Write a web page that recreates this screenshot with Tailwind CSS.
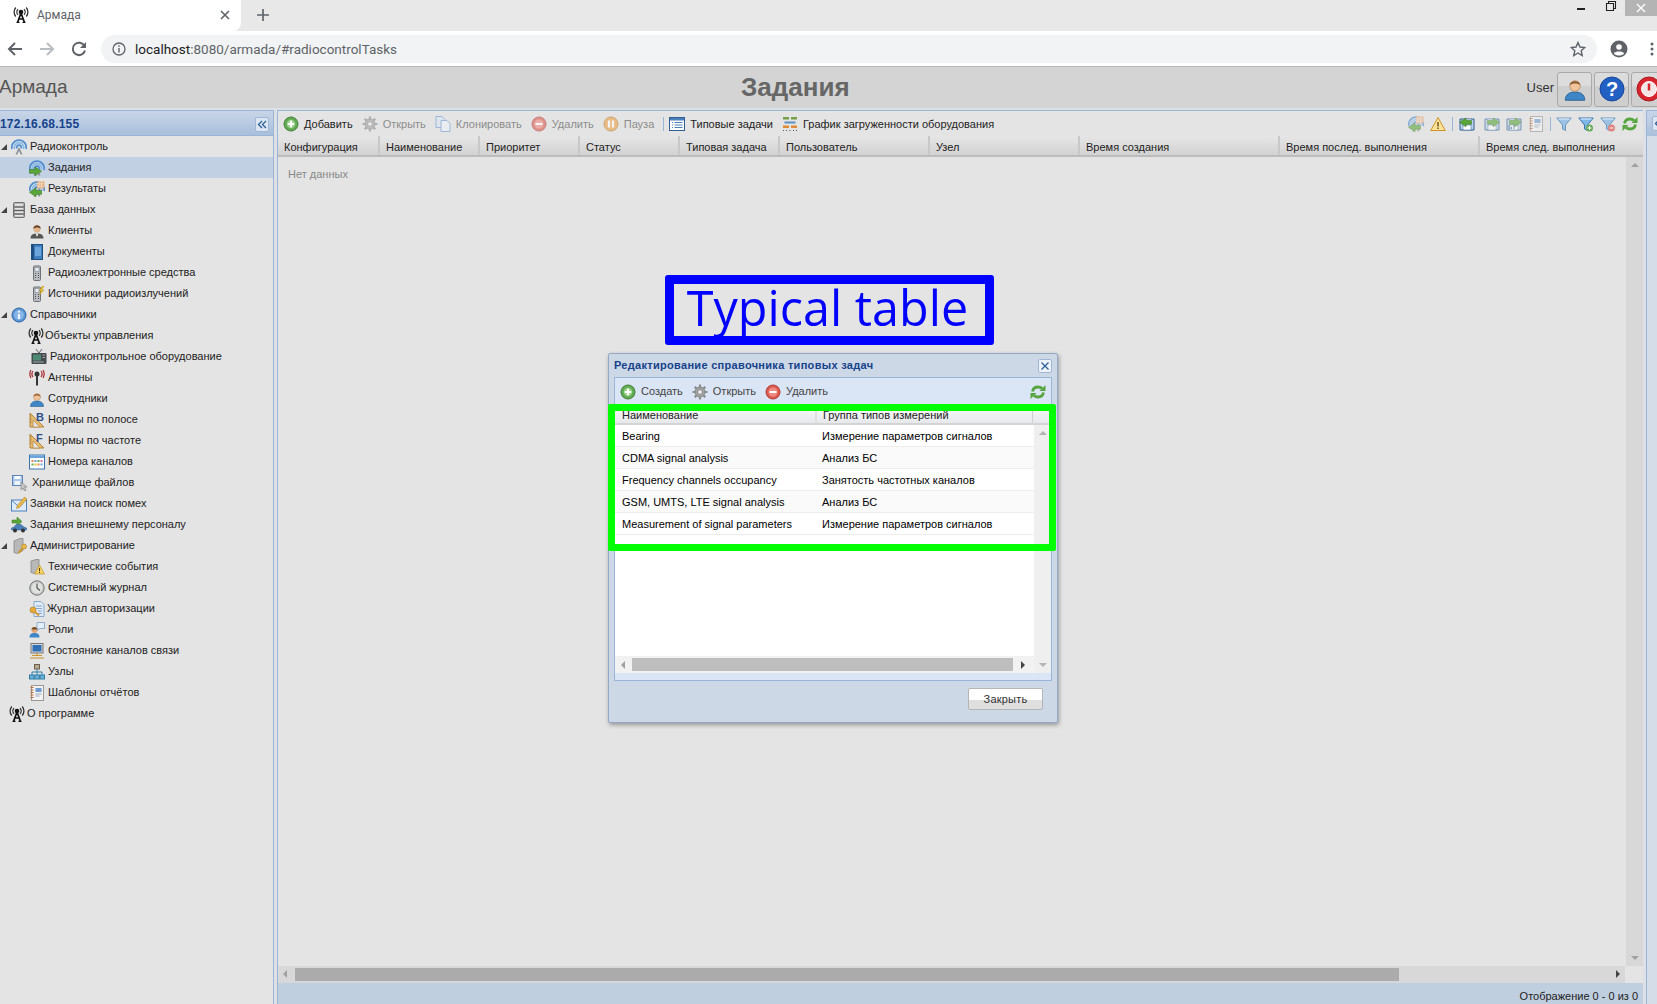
<!DOCTYPE html>
<html lang="ru">
<head>
<meta charset="UTF-8">
<title>Армада</title>
<script src="https://cdn.jsdelivr.net/npm/@tailwindcss/browser@4"></script>
</head>
<body class="relative w-[1657px] h-[1004px] overflow-hidden bg-[#e4e4e4] text-[11px] text-[#222] font-['Liberation_Sans',Arial,sans-serif]">

<!-- icon sprites -->
<svg class="hidden">
  <symbol id="antenna" viewBox="0 0 16 16"><g fill="none" stroke="#111" stroke-width="1.700"><path d="M8 6 4.500 15.500M8 6l3.500 9.500M5.800 12h4.400M3.500 15.500h3M9.500 15.500h3"/><path d="M5 7.800a4 4 0 0 1 0-5.600M11 7.800a4 4 0 0 0 0-5.600" stroke="#333" stroke-width="1.300"/><path d="M2.800 9.500a6.800 6.800 0 0 1 0-9M13.200 9.500a6.800 6.800 0 0 0 0-9" stroke="#333" stroke-width="1.300"/></g><circle cx="8" cy="5" r="2.300" fill="#111"/></symbol>
  <symbol id="radar" viewBox="0 0 16 16"><g fill="none" stroke-width="1.700"><path d="M1 10a7.200 7.200 0 1 1 14 0" stroke="#4f8fd0"/><path d="M3.600 10a4.700 4.700 0 1 1 8.800 0" stroke="#8dbbe8"/><path d="M5.800 9.500a2.400 2.400 0 1 1 4.400 0" stroke="#4f8fd0"/></g><path d="M8 8 4.500 15.500h1.800L8 11.800l1.700 3.700h1.800z" fill="#8a8f96"/></symbol>
  <symbol id="arrowleft" viewBox="0 0 16 16"><path d="M7 7 .5 11.300 7 15.800v-2.500h5.500V9.500H7z" fill="#5aa63a" stroke="#3a7a22" stroke-width=".6"/></symbol>
  <symbol id="arrowright" viewBox="0 0 16 16"><path d="M6 7l6.500 4.300L6 15.800v-2.500H.5V9.500H6z" fill="#5aa63a" stroke="#3a7a22" stroke-width=".6"/></symbol>
  <symbol id="server" viewBox="0 0 16 16"><rect x="2.500" y=".5" width="11" height="15" rx="1" fill="#a8a8a8" stroke="#737373"/><path d="M3 5h10M3 8.500h10M3 12h10" stroke="#5e5e5e"/><rect x="4" y="1.800" width="8" height="2" fill="#e6e6e6"/><rect x="4" y="6" width="8" height="1.500" fill="#e6e6e6"/><rect x="4" y="9.500" width="8" height="1.500" fill="#e6e6e6"/><rect x="4" y="13" width="8" height="1.500" fill="#e6e6e6"/></symbol>
  <symbol id="person" viewBox="0 0 16 16"><path d="M1.500 15.500c0-4 3-5.500 6.500-5.500s6.500 1.500 6.500 5.500z" fill="#3f86c6" stroke="#2a5f90" stroke-width=".6"/><circle cx="8" cy="6" r="3.500" fill="#f0c39a" stroke="#b98a60" stroke-width=".5"/><path d="M4.500 5.500C4.500 2 11.500 2 11.500 5.500 10 4 6 4 4.500 5.500z" fill="#8a5a2c"/></symbol>
  <symbol id="phone" viewBox="0 0 16 16"><rect x="4.500" y="1" width="7" height="14.500" rx="1" fill="#b8bcc0" stroke="#6d7277"/><rect x="6" y="2.500" width="4" height="4" fill="#e4edf5" stroke="#6d7277" stroke-width=".5"/><path d="M6 8.500h1M9 8.500h1M6 10.500h1M9 10.500h1M6 12.500h1M9 12.500h1" stroke="#555"/></symbol>
  <symbol id="ruler" viewBox="0 0 16 16"><path d="M1 1v14h14z" fill="#e6bd70" stroke="#b5853a"/><path d="M4 8v7h7z" fill="#e4e4e4" stroke="#b5853a" stroke-width=".7"/><path d="M1 4h1.500M1 7h1.500M1 10h1.500" stroke="#8a6428" stroke-width=".7"/></symbol>
  <symbol id="gear" viewBox="0 0 16 16"><circle cx="8" cy="8" r="5" fill="#a5a5a5" stroke="#777" stroke-width=".8"/><path d="M8 .5v3M8 12.500v3M.5 8h3M12.500 8h3M2.700 2.700l2 2M11.300 11.300l2 2M2.700 13.300l2-2M11.300 4.700l2-2" stroke="#8c8c8c" stroke-width="2.200"/><circle cx="8" cy="8" r="2.500" fill="#e8e8e8" stroke="#777" stroke-width=".8"/></symbol>
  <symbol id="plus" viewBox="0 0 16 16"><circle cx="8" cy="8" r="7" fill="#62ab54" stroke="#3f8035"/><circle cx="8" cy="8" r="4.200" fill="#9ed28f"/><path d="M8 4.800v6.400M4.800 8h6.400" stroke="#fff" stroke-width="2"/></symbol>
  <symbol id="minus" viewBox="0 0 16 16"><circle cx="8" cy="8" r="7" fill="#dd5a50" stroke="#b23a32"/><circle cx="8" cy="8" r="4.500" fill="#ee8a80"/><path d="M4.500 8h7" stroke="#fff" stroke-width="2"/></symbol>
  <symbol id="pause" viewBox="0 0 16 16"><circle cx="8" cy="8" r="7" fill="#eda24a" stroke="#c27a25"/><path d="M6 4.500v7M10 4.500v7" stroke="#fff" stroke-width="2.200"/></symbol>
  <symbol id="copy" viewBox="0 0 16 16"><path d="M1 .5h6l3 3v8H1z" fill="#dbe7f6" stroke="#6d9ad0"/><path d="M6 4.500h6l3 3v8H6z" fill="#eef4fb" stroke="#6d9ad0"/></symbol>
  <symbol id="table" viewBox="0 0 16 16"><rect x=".5" y="1.500" width="15" height="13" fill="#fff" stroke="#2e5f96"/><rect x="1" y="2" width="14" height="2.500" fill="#4a7fb8"/><path d="M3 6.500h1M3 9h1M3 11.500h1M5.500 6.500h8M5.500 9h8M5.500 11.500h8" stroke="#4a7fb8"/></symbol>
  <symbol id="gantt" viewBox="0 0 16 16"><rect x="1" y="1" width="6" height="2.500" fill="#76a04a"/><rect x="9" y="1" width="6" height="2.500" fill="#76a04a"/><rect x="2.500" y="5.500" width="11" height="2" fill="#5c8fc4"/><rect x="1" y="9.500" width="6" height="2.500" fill="#e08a3a"/><rect x="9" y="9.500" width="6" height="2.500" fill="#e08a3a"/><path d="M1 14.500h1M4 14.500h1M7.500 14.500h1M11 14.500h1M14 14.500h1" stroke="#555"/></symbol>
  <symbol id="results" viewBox="0 0 16 16"><use href="#radar"/><path d="M8 .5h7.500v7H8z" fill="#e0a878"/><path d="M10 .5v7M12.500 .5v7M8 2.800h7.500M8 5.200h7.500" stroke="#f6e6d6" stroke-width=".7"/><use href="#arrowleft"/></symbol>
  <symbol id="tasks" viewBox="0 0 16 16"><use href="#radar"/><use href="#arrowright"/></symbol>
  <symbol id="warning" viewBox="0 0 16 16"><path d="M8 1.500 15.300 14.500H.7z" fill="#fbe49a" stroke="#cf9322"/><path d="M8 6v4.500M8 11.500v1.500" stroke="#6b4a10" stroke-width="1.400"/></symbol>
  <symbol id="notebook" viewBox="0 0 16 16"><rect x="2.500" y=".5" width="12" height="15" fill="#f2f2f2" stroke="#999"/><path d="M1.500 2.500h3M1.500 5h3M1.500 7.500h3M1.500 10h3M1.500 12.500h3" stroke="#b8652c" stroke-width="1.100"/><rect x="6.500" y="3" width="6" height="4" fill="#6d9ad0"/><path d="M6.500 9h6M6.500 11h4" stroke="#9ab"/></symbol>
  <symbol id="savefile" viewBox="0 0 16 16"><path d="M1 3h14v11H1z" fill="#bcd2ea" stroke="#2e5f96"/><rect x="4" y="3.500" width="8" height="3.500" fill="#eef4fb"/><rect x="4" y="9" width="8" height="5" fill="#fff" stroke="#2e5f96" stroke-width=".5"/></symbol>
  <symbol id="filter" viewBox="0 0 16 16"><path d="M.8 2h14.400L9.500 9v5.500L6.500 13V9z" fill="#7eb6e6" stroke="#3a76ae"/><path d="M2.500 3h11" stroke="#d8ecfb" stroke-width="1.200"/></symbol>
  <symbol id="refresh" viewBox="0 0 16 16"><g fill="none" stroke="#58a540" stroke-width="2.800"><path d="M2.500 7.500c.5-3 2.500-4.500 5.500-4.500 1.800 0 3 .5 4 1.500"/><path d="M13.500 8.500c-.5 3-2.500 4.500-5.500 4.500-1.800 0-3-.5-4-1.500"/></g><path d="M15.500 1v6h-6zM.5 15V9h6z" fill="#58a540"/></symbol>
  <symbol id="tree-arrow" viewBox="0 0 6 6"><path d="M6 0v6H0z" fill="#444"/></symbol>
</svg>

<!-- browser tab strip -->
<div class="relative flex h-[31px] bg-[#e8e8e8]">
  <div class="flex items-center w-[241px] h-[31px] pb-[2px] bg-white rounded-br-lg">
    <svg class="ml-[13px] w-4 h-4"><use href="#antenna"/></svg>
    <span class="ml-[8px] text-[12px] text-[#5f6368] font-['Roboto',sans-serif]">Армада</span>
    <svg class="ml-auto mr-[8px] w-[16px] h-[16px]" viewBox="0 0 16 16"><path d="M4 4l8 8M12 4l-8 8" stroke="#5f6368" stroke-width="1.600"/></svg>
  </div>
  <svg class="ml-[14px] mt-[7px] w-[16px] h-[16px]" viewBox="0 0 16 16"><path d="M8 2v12M2 8h12" stroke="#5f6368" stroke-width="1.700"/></svg>
  <div class="ml-auto flex items-start h-[16px]">
    <svg class="w-[26px] h-[16px] mr-[3px]" viewBox="0 0 26 16"><path d="M8 9h8" stroke="#222" stroke-width="2"/></svg>
    <svg class="w-[26px] h-[16px] mr-[1px]" viewBox="0 0 26 16"><path d="M8.500 3.500h7v7h-7zM10.500 3V1.500h7v7H16" fill="none" stroke="#222" stroke-width="1.100"/></svg>
    <div class="flex items-center justify-center w-[32px] h-[16px] bg-[#b4b4b4]">
      <svg class="w-[12px] h-[12px]" viewBox="0 0 12 12"><path d="M2 2l8 8M10 2l-8 8" stroke="#fff" stroke-width="1.400"/></svg>
    </div>
  </div>
</div>

<!-- browser toolbar -->
<div class="flex items-center h-[36px] pt-px bg-white border-b border-[#b8b8b8]">
  <svg class="ml-[7px] w-4 h-4" viewBox="0 0 16 16"><path d="M15 8H2M8 2 2 8l6 6" fill="none" stroke="#5f6368" stroke-width="2"/></svg>
  <svg class="ml-[16px] w-4 h-4" viewBox="0 0 16 16"><path d="M1 8h13M8 2l6 6-6 6" fill="none" stroke="#b9bcc0" stroke-width="2"/></svg>
  <svg class="ml-[16px] w-4 h-4" viewBox="0 0 16 16"><path d="M13.500 5A6.200 6.200 0 1 0 14 9.500" fill="none" stroke="#5f6368" stroke-width="2"/><path d="M15 1v6H9z" fill="#5f6368"/></svg>
  <div class="flex items-center ml-[14px] w-[1496px] h-[28px] bg-[#f1f3f4] rounded-full">
    <svg class="ml-[11px] w-[14px] h-[14px]" viewBox="0 0 14 14"><circle cx="7" cy="7" r="6" fill="none" stroke="#5f6368" stroke-width="1.300"/><path d="M7 6v4.500M7 3.300v1.500" stroke="#5f6368" stroke-width="1.400"/></svg>
    <span class="ml-[9px] text-[13.5px] text-[#5f6368] font-['Roboto',sans-serif]"><span class="text-[#202124]">localhost</span>:8080/armada/#radiocontrolTasks</span>
    <svg class="ml-auto mr-[11px] w-[16px] h-[16px]" viewBox="0 0 16 16"><path d="M8 1.500l2 4.500 4.800.5-3.600 3.200 1 4.800L8 12l-4.200 2.500 1-4.800L1.200 6.500 6 6z" fill="none" stroke="#5f6368" stroke-width="1.400"/></svg>
  </div>
  <svg class="ml-[13px] w-[18px] h-[18px]" viewBox="0 0 18 18"><circle cx="9" cy="9" r="8.500" fill="#5f6368"/><circle cx="9" cy="7" r="2.800" fill="#fff"/><path d="M3.800 13.500c1.500-2.600 8.900-2.600 10.400 0-2.600 2.800-7.800 2.800-10.400 0z" fill="#fff"/></svg>
  <svg class="ml-[22px] w-[4px] h-[14px]" viewBox="0 0 4 14"><circle cx="2" cy="2" r="1.500" fill="#5f6368"/><circle cx="2" cy="7" r="1.500" fill="#5f6368"/><circle cx="2" cy="12" r="1.500" fill="#5f6368"/></svg>
</div>

<!-- app header -->
<div class="flex items-center h-[41px] bg-[#d4d4d4]">
  <div class="w-[742px] -ml-[1px] text-[19px] text-[#555]">Армада</div>
  <div class="text-[26px] font-bold text-[#666]">Задания</div>
  <span class="ml-auto mr-[3px] text-[13px] text-[#333]">User</span>
  <div class="flex gap-[2px] -mr-[9px] mt-[3px]">
    <div class="flex items-center justify-center w-[35px] h-[35px] rounded-[3px] border border-[#aaa] bg-[linear-gradient(#dcdcdc_38%,#cfcfcf_38%)]">
      <svg class="w-[24px] h-[24px]"><use href="#person"/></svg>
    </div>
    <div class="flex items-center justify-center w-[35px] h-[35px] rounded-[3px] border border-[#aaa] bg-[linear-gradient(#dcdcdc_38%,#cfcfcf_38%)]">
      <svg class="w-[26px] h-[26px]" viewBox="0 0 26 26"><circle cx="13" cy="13" r="12" fill="#2260c4" stroke="#174a96"/><text x="13" y="20" text-anchor="middle" font-size="20" font-weight="700" fill="#fff">?</text></svg>
    </div>
    <div class="flex items-center justify-center w-[35px] h-[35px] rounded-[3px] border border-[#aaa] bg-[linear-gradient(#dcdcdc_38%,#cfcfcf_38%)]">
      <svg class="w-[26px] h-[26px]" viewBox="0 0 26 26"><circle cx="13" cy="13" r="12" fill="#d8242c" stroke="#a81a20"/><circle cx="13" cy="13" r="7.500" fill="#f4e6e6" stroke="#fff"/><path d="M13 7.500v7" stroke="#d8242c" stroke-width="2.500"/></svg>
    </div>
  </div>
</div>

<!-- workspace -->
<div class="flex h-[896px] pt-[2px] bg-[#dde1e6]">

  <!-- navigation tree -->
  <aside class="w-[274px] shrink-0 bg-[#e4e4e4] border-r border-t border-[#99b5d8]">
    <div class="relative flex items-center h-[25px] pt-[2px] border-b border-[#99b5d8] bg-[linear-gradient(#c8d5e7,#a9bfdb)]">
      <span class="text-[12px] tracking-[0.2px] font-bold text-[#15428b]">172.16.68.155</span>
      <div class="absolute right-[4px] top-[6px] flex items-center justify-center w-[14px] h-[15px] rounded-[2px] border border-[#9fb8d8] bg-[#dce6f3]">
        <svg class="w-[10px] h-[9px]" viewBox="0 0 10 9"><path d="M5 1 1.500 4.500 5 8M9 1 5.500 4.500 9 8" fill="none" stroke="#2e5f96" stroke-width="1.300"/></svg>
      </div>
    </div>
    <div class="text-[11px] text-[#222]">
      <div class="flex items-center h-[21px] pl-[1px]"><svg class="w-[6px] h-[6px]"><use href="#tree-arrow"/></svg><svg class="ml-[4px] w-4 h-4"><use href="#radar"/></svg><span class="ml-[3px]">Радиоконтроль</span></div>
      <div class="flex items-center h-[21px] pl-[29px] bg-[#c1d0e3]"><svg class="w-4 h-4"><use href="#tasks"/></svg><span class="ml-[3px]">Задания</span></div>
      <div class="flex items-center h-[21px] pl-[29px]"><svg class="w-4 h-4"><use href="#results"/></svg><span class="ml-[3px]">Результаты</span></div>
      <div class="flex items-center h-[21px] pl-[1px]"><svg class="w-[6px] h-[6px]"><use href="#tree-arrow"/></svg><svg class="ml-[4px] w-4 h-4"><use href="#server"/></svg><span class="ml-[3px]">База данных</span></div>
      <div class="flex items-center h-[21px] pl-[29px]"><svg class="w-4 h-4" viewBox="0 0 16 16"><path d="M1.500 15.500c0-4 3-5 6.500-5s6.500 1 6.500 5z" fill="#555"/><path d="M6.500 10.500 8 14l1.500-3.500z" fill="#eee"/><circle cx="8" cy="6" r="3.500" fill="#e2b48c"/><path d="M4.300 6C4 1 12 1 11.700 6 10 4 6 4 4.300 6z" fill="#6b4226"/></svg><span class="ml-[3px]">Клиенты</span></div>
      <div class="flex items-center h-[21px] pl-[29px]"><svg class="w-4 h-4" viewBox="0 0 16 16"><rect x="2.500" y=".5" width="11" height="15" fill="#3f7fbf" stroke="#1f4f80"/><rect x="3" y="1" width="2" height="14" fill="#1f4f80"/><rect x="6" y="3" width="6" height="9" fill="#6ba5dc"/></svg><span class="ml-[3px]">Документы</span></div>
      <div class="flex items-center h-[21px] pl-[29px]"><svg class="w-4 h-4"><use href="#phone"/></svg><span class="ml-[3px]">Радиоэлектронные средства</span></div>
      <div class="flex items-center h-[21px] pl-[29px]"><svg class="w-4 h-4" viewBox="0 0 16 16"><use href="#phone"/><path d="M13.500 0 10 5h2L10.500 9 15 4h-2.200L15 0z" fill="#e8c030" stroke="#b08a10" stroke-width=".4"/></svg><span class="ml-[3px]">Источники радиоизлучений</span></div>
      <div class="flex items-center h-[21px] pl-[1px]"><svg class="w-[6px] h-[6px]"><use href="#tree-arrow"/></svg><svg class="ml-[4px] w-4 h-4" viewBox="0 0 16 16"><circle cx="8" cy="8" r="7" fill="#5d97d6" stroke="#2e66a8"/><circle cx="8" cy="8" r="4.800" fill="#89b8e8"/><path d="M8 7v5M8 3.800v1.700" stroke="#fff" stroke-width="1.800"/></svg><span class="ml-[3px]">Справочники</span></div>
      <div class="flex items-center h-[21px] pl-[28px]"><svg class="w-4 h-4"><use href="#antenna"/></svg><span class="ml-[1px]">Объекты управления</span></div>
      <div class="flex items-center h-[21px] pl-[31px]"><svg class="w-4 h-4" viewBox="0 0 16 16"><path d="M5 0l3 4 3-4" fill="none" stroke="#556" stroke-width=".9"/><rect x=".5" y="4" width="15" height="11" rx="1" fill="#444b4f"/><rect x="2" y="5.500" width="8" height="6" fill="#4e8a72"/><path d="M11.500 6h2.500M11.500 8.500h2.500M2 13h11" stroke="#aaa"/></svg><span class="ml-[3px]">Радиоконтрольное оборудование</span></div>
      <div class="flex items-center h-[21px] pl-[29px]"><svg class="w-4 h-4" viewBox="0 0 16 16"><path d="M8 6v9.500" stroke="#333" stroke-width="2"/><circle cx="8" cy="4" r="2.500" fill="#333"/><path d="M4 1a5 5 0 0 0 0 6M12 1a5 5 0 0 1 0 6M2 0a8 8 0 0 0 0 8M14 0a8 8 0 0 1 0 8" fill="none" stroke="#a8282c" stroke-width="1.200"/></svg><span class="ml-[3px]">Антенны</span></div>
      <div class="flex items-center h-[21px] pl-[29px]"><svg class="w-4 h-4"><use href="#person"/></svg><span class="ml-[3px]">Сотрудники</span></div>
      <div class="flex items-center h-[21px] pl-[29px]"><svg class="w-4 h-4" viewBox="0 0 16 16"><use href="#ruler"/><text x="7" y="9" font-size="11" font-weight="700" fill="#2e4f86">B</text></svg><span class="ml-[3px]">Нормы по полосе</span></div>
      <div class="flex items-center h-[21px] pl-[29px]"><svg class="w-4 h-4" viewBox="0 0 16 16"><use href="#ruler"/><text x="7" y="9" font-size="11" font-weight="700" fill="#2e4f86">F</text></svg><span class="ml-[3px]">Нормы по частоте</span></div>
      <div class="flex items-center h-[21px] pl-[29px]"><svg class="w-4 h-4" viewBox="0 0 16 16"><rect x=".5" y="1" width="15" height="14" fill="#fff" stroke="#3a76ae"/><rect x="1" y="1.500" width="14" height="2.500" fill="#6ba5dc"/><path d="M2.500 6h2v2h-2z" fill="#e0864a"/><path d="M5.500 6h2v2h-2z" fill="#6ba5dc"/><path d="M8.500 6h2v2h-2z" fill="#62ab54"/><path d="M11.500 6h2v2h-2z" fill="#d870a0"/><path d="M2.500 9.500h2v2h-2z" fill="#62ab54"/><path d="M5.500 9.500h2v2h-2z" fill="#e8c030"/><path d="M8.500 9.500h2v2h-2z" fill="#e0864a"/><path d="M11.500 9.500h2v2h-2z" fill="#6ba5dc"/></svg><span class="ml-[3px]">Номера каналов</span></div>
      <div class="flex items-center h-[21px] pl-[12px]"><svg class="w-4 h-4" viewBox="0 0 16 16"><rect x=".5" y=".5" width="10" height="10" fill="#a9c6e8" stroke="#5c86b8"/><rect x="2.500" y="1" width="6" height="3" fill="#fff"/><rect x="2.500" y="6" width="6" height="4" fill="#eef4fb"/><path d="M9 7v8l2-2 1.500 3 1.500-.8L12.500 12h2.500z" fill="#c6c6c6" stroke="#777" stroke-width=".6"/></svg><span class="ml-[4px]">Хранилище файлов</span></div>
      <div class="flex items-center h-[21px] pl-[11px]"><svg class="w-4 h-4" viewBox="0 0 16 16"><rect x=".5" y="4" width="15" height="11" fill="#dfeafa" stroke="#4a7fb8"/><path d="M1 4.500 8 11l4-3.500" fill="none" stroke="#4a7fb8"/><path d="M6 10 13.500 1 16 3 8.500 11.500l-3 1z" fill="#e8b84a" stroke="#a87c20" stroke-width=".5"/></svg><span class="ml-[3px]">Заявки на поиск помех</span></div>
      <div class="flex items-center h-[21px] pl-[11px]"><svg class="w-4 h-4" viewBox="0 0 16 16"><path d="M1 3h5V0l5 4.500L6 9V6H1z" fill="#5aa63a" stroke="#3a7a22" stroke-width=".5"/><path d="M.5 13v-2l2.500-1 2-2.500h5l3 2.500 2.500 1v2z" fill="#4a7fb8" stroke="#2e5f96" stroke-width=".5"/><circle cx="4" cy="13.500" r="2" fill="#333"/><circle cx="12" cy="13.500" r="2" fill="#333"/></svg><span class="ml-[3px]">Задания внешнему персоналу</span></div>
      <div class="flex items-center h-[21px] pl-[1px]"><svg class="w-[6px] h-[6px]"><use href="#tree-arrow"/></svg><svg class="ml-[5px] w-4 h-4" viewBox="0 0 16 16"><path d="M2 3 8 .5h3v12l-6 3-3-1z" fill="#b8b8b8" stroke="#7c7c7c" stroke-width=".7"/><circle cx="12" cy="8.500" r="2.500" fill="#e8b84a" stroke="#a87c20" stroke-width=".6"/><path d="M10.500 10.500 6.500 15" stroke="#c8962c" stroke-width="2"/></svg><span class="ml-[2px]">Администрирование</span></div>
      <div class="flex items-center h-[21px] pl-[29px]"><svg class="w-4 h-4" viewBox="0 0 16 16"><path d="M2 2 7 .5h3v11l-5 3-3-1z" fill="#b8b8b8" stroke="#7c7c7c" stroke-width=".7"/><path d="M10.500 6l5 9h-10z" fill="#f4d468" stroke="#c2922a" stroke-width=".7"/><path d="M10.500 9v3.300M10.500 13v1" stroke="#5a4010"/></svg><span class="ml-[3px]">Технические события</span></div>
      <div class="flex items-center h-[21px] pl-[29px]"><svg class="w-4 h-4" viewBox="0 0 16 16"><circle cx="8" cy="8" r="7.200" fill="#c4c8c4" stroke="#777"/><circle cx="8" cy="8" r="5.500" fill="#dfe2df"/><path d="M8 3.500V8l3 2.500" fill="none" stroke="#555" stroke-width="1.200"/></svg><span class="ml-[3px]">Системный журнал</span></div>
      <div class="flex items-center h-[21px] pl-[29px]"><svg class="w-4 h-4" viewBox="0 0 16 16"><path d="M5 .5h7l3 3v12H5z" fill="#dfeafa" stroke="#8aa8c8"/><path d="M7 5h6M7 7.500h6M9 10h4M9 12.500h4" stroke="#8aa8c8"/><circle cx="4" cy="9" r="3" fill="#e8a83a" stroke="#a87c20" stroke-width=".6"/><path d="M6 11l4 3.500" stroke="#d8962c" stroke-width="2"/></svg><span class="ml-[2px]">Журнал авторизации</span></div>
      <div class="flex items-center h-[21px] pl-[29px]"><svg class="w-4 h-4" viewBox="0 0 16 16"><path d="M.5 15.500c0-3.500 2-4.500 5-4.500s5 1 5 4.500z" fill="#3f86c6"/><circle cx="5.500" cy="8" r="3" fill="#e2a878"/><path d="M2.500 7.500C2.500 4 8.500 4 8.500 7.500z" fill="#7a4c24"/><path d="M8 .5h7.500v6H11l-2.500 2 .5-2H8z" fill="#e4eef8" stroke="#7c9cc0" stroke-width=".8"/></svg><span class="ml-[3px]">Роли</span></div>
      <div class="flex items-center h-[21px] pl-[29px]"><svg class="w-4 h-4" viewBox="0 0 16 16"><rect x="2" y=".5" width="12" height="9.500" fill="#d8d8d8" stroke="#777"/><rect x="3.500" y="2" width="9" height="6.500" fill="#2e6fb8"/><path d="M8 10v2M3 12.500h10M1 15h14" stroke="#c8962c" stroke-width="1.200"/></svg><span class="ml-[3px]">Состояние каналов связи</span></div>
      <div class="flex items-center h-[21px] pl-[29px]"><svg class="w-4 h-4" viewBox="0 0 16 16"><rect x="5.500" y=".5" width="5" height="4.500" fill="#b8a890" stroke="#6c6050"/><path d="M8 5v3M3 11V8h10v3M8 8v3" fill="none" stroke="#2e7fa8"/><rect x=".5" y="11" width="4.500" height="4" fill="#6fb0d8" stroke="#2e7fa8"/><rect x="5.800" y="11" width="4.500" height="4" fill="#6fb0d8" stroke="#2e7fa8"/><rect x="11" y="11" width="4.500" height="4" fill="#6fb0d8" stroke="#2e7fa8"/></svg><span class="ml-[3px]">Узлы</span></div>
      <div class="flex items-center h-[21px] pl-[29px]"><svg class="w-4 h-4"><use href="#notebook"/></svg><span class="ml-[3px]">Шаблоны отчётов</span></div>
      <div class="flex items-center h-[21px] pl-[9px]"><svg class="w-4 h-4"><use href="#antenna"/></svg><span class="ml-[2px]">О программе</span></div>
    </div>
  </aside>

  <!-- main panel -->
  <main class="ml-[3px] shrink-0 flex flex-col w-[1366px] border-l border-t border-[#99b5d8] bg-[#e4e4e4]">
    <div class="flex items-center h-[25px] pt-[2px] pl-[5px] text-[11px]">
      <svg class="w-4 h-4"><use href="#plus"/></svg><span class="ml-[5px] text-[#222]">Добавить</span>
      <div class="flex items-center text-[#8c8c8c]">
        <svg class="ml-[9px] w-4 h-4 opacity-60"><use href="#gear"/></svg><span class="ml-[5px]">Открыть</span>
        <svg class="ml-[9px] w-4 h-4 opacity-60"><use href="#copy"/></svg><span class="ml-[5px]">Клонировать</span>
        <svg class="ml-[9px] w-4 h-4 opacity-60"><use href="#minus"/></svg><span class="ml-[5px]">Удалить</span>
        <svg class="ml-[9px] w-4 h-4 opacity-60"><use href="#pause"/></svg><span class="ml-[5px]">Пауза</span>
      </div>
      <div class="ml-[9px] w-px h-[14px] bg-[#99b5d8]"></div>
      <svg class="ml-[5px] w-4 h-4"><use href="#table"/></svg><span class="ml-[5px]">Типовые задачи</span>
      <svg class="ml-[9px] w-4 h-4"><use href="#gantt"/></svg><span class="ml-[5px]">График загруженности оборудования</span>
      <div class="ml-auto mr-[5px] flex items-center">
        <svg class="w-4 h-4 opacity-60"><use href="#results"/></svg>
        <svg class="ml-[6px] w-4 h-4"><use href="#warning"/></svg>
        <div class="ml-[6px] w-px h-[14px] bg-[#99b5d8]"></div>
        <svg class="ml-[5px] w-[18px] h-4" viewBox="0 0 16 16"><use href="#savefile"/><use href="#arrowleft" y="-5"/></svg>
        <svg class="ml-[8px] w-4 h-4 opacity-60" viewBox="0 0 16 16"><use href="#savefile"/><use href="#arrowright" x="3" y="-5"/></svg>
        <svg class="ml-[6px] w-4 h-4 opacity-60" viewBox="0 0 16 16"><use href="#savefile"/><path d="M3 13V9M5.500 13v-2M8 13V8" stroke="#2e5f96"/><use href="#arrowright" x="3" y="-5"/></svg>
        <svg class="ml-[6px] w-4 h-4 opacity-60"><use href="#notebook"/></svg>
        <div class="ml-[6px] w-px h-[14px] bg-[#99b5d8]"></div>
        <svg class="ml-[5px] w-4 h-4 opacity-70"><use href="#filter"/></svg>
        <svg class="ml-[6px] w-4 h-4" viewBox="0 0 16 16"><use href="#filter"/><circle cx="11.500" cy="12" r="3.500" fill="#62ab54"/><path d="M11.500 10v4M9.500 12h4" stroke="#fff"/></svg>
        <svg class="ml-[6px] w-4 h-4 opacity-70" viewBox="0 0 16 16"><use href="#filter"/><circle cx="11.500" cy="12" r="3.500" fill="#dd5a50"/><path d="M9.500 12h4" stroke="#fff"/></svg>
        <svg class="ml-[6px] w-4 h-4"><use href="#refresh"/></svg>
      </div>
    </div>

    <div class="flex h-[21px] border-b-2 border-[#bcbcbc] bg-[linear-gradient(#e6e6e6,#d2d2d2)] text-[#222]">
      <div class="w-[102px] pl-[6px] leading-[22px] border-r-2 border-[#c8c8c8]">Конфигурация</div>
      <div class="w-[100px] pl-[6px] leading-[22px] border-r-2 border-[#c8c8c8]">Наименование</div>
      <div class="w-[100px] pl-[6px] leading-[22px] border-r-2 border-[#c8c8c8]">Приоритет</div>
      <div class="w-[100px] pl-[6px] leading-[22px] border-r-2 border-[#c8c8c8]">Статус</div>
      <div class="w-[100px] pl-[6px] leading-[22px] border-r-2 border-[#c8c8c8]">Типовая задача</div>
      <div class="w-[150px] pl-[6px] leading-[22px] border-r-2 border-[#c8c8c8]">Пользователь</div>
      <div class="w-[150px] pl-[6px] leading-[22px] border-r-2 border-[#c8c8c8]">Узел</div>
      <div class="w-[200px] pl-[6px] leading-[22px] border-r-2 border-[#c8c8c8]">Время создания</div>
      <div class="w-[200px] pl-[6px] leading-[22px] border-r-2 border-[#c8c8c8]">Время послед. выполнения</div>
      <div class="flex-1 pl-[6px] leading-[22px]">Время след. выполнения</div>
    </div>

    <div class="flex h-[811px]">
      <div class="flex-1 pl-[10px] pt-[9px] text-[#888]">Нет данных</div>
      <div class="flex flex-col items-center justify-between w-[17px] py-[6px] bg-[#d8d8d8]">
        <div class="w-0 h-0 border-x-[4px] border-x-transparent border-b-[4px] border-b-[#a0a0a0]"></div>
        <div class="w-0 h-0 border-x-[4px] border-x-transparent border-t-[4px] border-t-[#a0a0a0]"></div>
      </div>
    </div>

    <div class="flex items-center h-[17px]">
      <div class="flex items-center w-[1347px] h-[17px] bg-[#d8d8d8]">
        <div class="ml-[5px] w-0 h-0 border-y-[4px] border-y-transparent border-r-[4px] border-r-[#a0a0a0]"></div>
        <div class="ml-[8px] w-[1104px] h-[13px] bg-[#ababab]"></div>
        <div class="ml-[217px] w-0 h-0 border-y-[4px] border-y-transparent border-l-[4px] border-l-[#444]"></div>
      </div>
    </div>

    <div class="flex-1 flex items-center justify-end pt-[5px] pr-[5px] bg-[#c0cfdf] text-[#222]">Отображение 0 - 0 из 0</div>
  </main>

  <!-- collapsed right panel -->
  <div class="ml-[3px] w-[11px] shrink-0 overflow-hidden border-l border-t border-[#99b5d8] bg-[#d4dde8]">
    <div class="flex items-center h-[25px] pl-[5px] bg-[linear-gradient(#c8d5e7,#a9bfdb)]">
      <div class="flex items-center justify-center w-[14px] h-[15px] shrink-0 rounded-[2px] border border-[#9fb8d8] bg-[#dce6f3]">
        <svg class="w-[10px] h-[9px]" viewBox="0 0 10 9"><path d="M5 1 1.500 4.500 5 8M9 1 5.500 4.500 9 8" fill="none" stroke="#2e5f96" stroke-width="1.300"/></svg>
      </div>
    </div>
  </div>
</div>

<!-- modal dialog -->
<div class="absolute left-[608px] top-[353px] flex flex-col w-[450px] h-[370px] px-[5px] rounded-[2px] border border-[#93a8c4] bg-[#cdd8e6] shadow-[1px_2px_4px_rgba(0,0,0,0.35)]">
  <div class="flex items-center h-[23px] shrink-0">
    <span class="font-bold tracking-[0.3px] text-[#15428b]">Редактирование справочника типовых задач</span>
    <div class="ml-auto flex items-center justify-center w-[14px] h-[14px] rounded-[2px] border border-[#9fb8d8] bg-[#eef3fa]">
      <svg class="w-[10px] h-[10px]" viewBox="0 0 10 10"><path d="M1.500 1.500l7 7M8.500 1.500l-7 7" stroke="#2e5f96" stroke-width="1.300"/></svg>
    </div>
  </div>
  <div class="flex flex-col h-[304px] shrink-0 border border-[#99b5d8] bg-[#dae5f5]">
    <div class="flex items-center h-[27px] shrink-0 pl-[5px] pr-[5px] text-[#444]">
      <svg class="w-4 h-4"><use href="#plus"/></svg><span class="ml-[5px]">Создать</span>
      <svg class="ml-[9px] w-4 h-4"><use href="#gear"/></svg><span class="ml-[5px]">Открыть</span>
      <svg class="ml-[9px] w-4 h-4"><use href="#minus"/></svg><span class="ml-[5px]">Удалить</span>
      <svg class="ml-auto w-4 h-4"><use href="#refresh"/></svg>
    </div>
    <div class="flex h-[20px] shrink-0 border-b-2 border-[#d4d4d4] bg-[linear-gradient(#fafafa,#e6e8ec)] text-[#222] leading-[20px]">
      <div class="w-[202px] pl-[7px] border-r-2 border-[#e0e0e0]">Наименование</div>
      <div class="w-[216px] pl-[6px] border-r border-[#cfcfcf]">Группа типов измерений</div>
    </div>
    <div class="flex h-[248px] shrink-0 bg-white">
      <div class="flex flex-col flex-1 text-black">
        <div class="flex h-[22px] shrink-0 pt-[2px] items-center border-b border-[#ededed]"><span class="w-[207px] pl-[7px]">Bearing</span><span>Измерение параметров сигналов</span></div>
        <div class="flex h-[22px] shrink-0 pt-[2px] items-center border-b border-[#ededed] bg-[#fafafa]"><span class="w-[207px] pl-[7px]">CDMA signal analysis</span><span>Анализ БС</span></div>
        <div class="flex h-[22px] shrink-0 pt-[2px] items-center border-b border-[#ededed]"><span class="w-[207px] pl-[7px]">Frequency channels occupancy</span><span>Занятость частотных каналов</span></div>
        <div class="flex h-[22px] shrink-0 pt-[2px] items-center border-b border-[#ededed] bg-[#fafafa]"><span class="w-[207px] pl-[7px]">GSM, UMTS, LTE signal analysis</span><span>Анализ БС</span></div>
        <div class="flex h-[22px] shrink-0 pt-[2px] items-center border-b border-[#ededed]"><span class="w-[207px] pl-[7px]">Measurement of signal parameters</span><span>Измерение параметров сигналов</span></div>
        <div class="mt-auto flex items-center h-[17px] bg-[#f2f2f2]">
          <div class="ml-[6px] w-0 h-0 border-y-[4px] border-y-transparent border-r-[4px] border-r-[#a0a0a0]"></div>
          <div class="ml-[7px] w-[381px] h-[13px] bg-[#bebebe]"></div>
          <div class="ml-[8px] w-0 h-0 border-y-[4px] border-y-transparent border-l-[4px] border-l-[#444]"></div>
        </div>
      </div>
      <div class="flex flex-col items-center justify-between w-[17px] pt-[6px] pb-[6px] bg-[#efefef]">
        <div class="w-0 h-0 border-x-[4px] border-x-transparent border-b-[4px] border-b-[#b4b4b4]"></div>
        <div class="w-0 h-0 border-x-[4px] border-x-transparent border-t-[4px] border-t-[#b4b4b4]"></div>
      </div>
    </div>
  </div>
  <div class="flex justify-end pt-[7px] pr-[9px]">
    <button class="w-[75px] h-[22px] pt-px rounded-[2px] border border-[#b5b5b5] bg-[linear-gradient(#ffffff_55%,#dfdfdf_55%)] text-[11px] tracking-[0.2px] text-[#333]">Закрыть</button>
  </div>
</div>

<!-- annotations -->
<div class="absolute left-[665px] top-[275px] flex items-center justify-center w-[329px] h-[70px] pb-[6px] pr-[4px] rounded-[3px] border-[9px] border-[#0000ff] text-[#0000ff] text-[48.5px] leading-none font-['Open_Sans',sans-serif]">Typical table</div>
<div class="absolute left-[608px] top-[404px] w-[448px] h-[147px] rounded-[2px] border-[7px] border-[#00ff00]"></div>

</body>
</html>
